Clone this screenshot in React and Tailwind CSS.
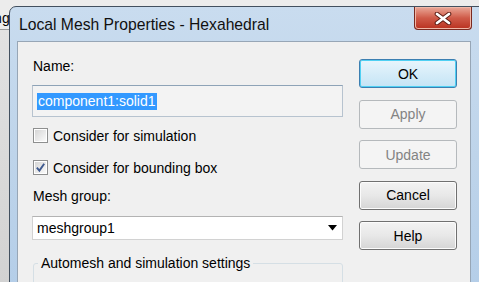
import clsx from 'clsx';

function Checkbox({ checked }) {
  return (
    <span className="w-[15px] h-[15px] shrink-0 border border-[#8e8f8f] p-px bg-white">
      <span className="w-full h-full flex items-center justify-center bg-linear-to-br from-[#d6d6d6] to-[#fafafa]">
        {checked && (
          <svg width="11" height="11" viewBox="0 0 11 11">
            <path d="M1.8 5.6 L4.4 8.6 L9.2 1.8" fill="none" stroke="#3f5a8f" strokeWidth="1.9" />
          </svg>
        )}
      </span>
    </span>
  );
}

function Btn({ children, variant = 'normal' }) {
  return (
    <div
      className={clsx(
        'h-[29px] rounded-[3px] border flex items-center justify-center text-[14px] leading-none',
        variant === 'default' && 'border-[#3c7fb1] bg-linear-to-b from-[#e8f5fc] to-[#c4e4f5] text-black shadow-[inset_0_0_0_1px_#4fd0f3]',
        variant === 'disabled' && 'border-[#b5b9bc] bg-[#f4f4f4] text-[#838383]',
        variant === 'normal' && 'border-[#707070] bg-linear-to-b from-[#f3f3f3] via-[#e8e8e8] to-[#d5d5d5] text-black shadow-[inset_0_0_0_1px_#fcfcfc]'
      )}
    >
      {children}
    </div>
  );
}

export default function App() {
  return (
    <div className="w-[479px] h-[282px] relative overflow-hidden bg-linear-to-b from-[#e4e4e4] to-[#d2d2d2] font-['Liberation_Sans',Arial,sans-serif] text-black">
      {/* desktop behind the dialog */}
      <div className="h-[30px] border-b border-[#9a9a9a] bg-[#ececec] pt-[10px] text-[14px] leading-[16px] -ml-[9px]">
        ing
      </div>

      {/* dialog window */}
      <div className="absolute left-[9px] top-[6px] w-[480px] h-[300px] border border-[#42505f] rounded-tl-[7px] bg-linear-to-b from-[#c9dcef] via-[#bed4ea] to-[#b3cde8] pl-[7px]">
        <div className="h-[34px] flex items-start">
          <div className="self-center pl-[2px] pt-[1px] text-[15.7px] leading-[18px] text-[#101010]">
            Local Mesh Properties - Hexahedral
          </div>
          <div className="ml-auto mr-[16px] w-[58px] h-[23px] rounded-b-[4px] border border-t-0 border-[#7a2a20] bg-linear-to-b from-[#e9a899] via-[#cf5a48] to-[#b9301f] shadow-[inset_0_0_0_1px_#f0b8a8] flex items-center justify-center">
            <svg width="18" height="13" viewBox="0 0 18 13">
              <path d="M3 2 L15 11 M15 2 L3 11" stroke="#5a1a12" strokeWidth="4.6" strokeLinecap="round" />
              <path d="M3 2 L15 11 M15 2 L3 11" stroke="#ffffff" strokeWidth="2.8" strokeLinecap="round" />
            </svg>
          </div>
        </div>

        <div className="w-[454px] h-[260px] border border-[#97a6b6] bg-[#f0f0f0] flex text-[14px] leading-[16px]">
          <div className="w-[311px] ml-[14px] pt-[16px] flex flex-col">
            <div className="h-[16px] pl-px">Name:</div>
            <div className="mt-[11px] h-[32px] border border-[#b7c3cf] border-t-[#8ea3b7] bg-[#f3f3f3] flex items-center pl-[4px]">
              <span className="bg-[#3399ff] text-white px-px h-[17px] leading-[17px]">component1:solid1</span>
            </div>
            <div className="mt-[11px] h-[15px] flex items-center gap-[5px] pl-px">
              <Checkbox />
              <span>Consider for simulation</span>
            </div>
            <div className="mt-[17px] h-[15px] flex items-center gap-[5px] pl-px">
              <Checkbox checked />
              <span>Consider for bounding box</span>
            </div>
            <div className="mt-[13px] h-[16px] pl-px">Mesh group:</div>
            <div className="mt-[12px] h-[24px] border border-[#d2d2d2] border-t-[#b3b3b3] bg-white flex items-center pl-[4px] pr-[5px]">
              <span>meshgroup1</span>
              <svg className="ml-auto" width="9" height="6" viewBox="0 0 9 6">
                <path d="M0 0 H9 L4.5 5.5 Z" fill="#000" />
              </svg>
            </div>
            <fieldset className="mt-[15px] ml-px h-[40px] border border-[#d5dfe5] rounded-[3px] pl-[4px]">
              <legend className="px-[3px]">Automesh and simulation settings</legend>
            </fieldset>
          </div>

          <div className="w-[98px] ml-[16px] pt-[17px] flex flex-col gap-[11.5px]">
            <Btn variant="default">OK</Btn>
            <Btn variant="disabled">Apply</Btn>
            <Btn variant="disabled">Update</Btn>
            <Btn>Cancel</Btn>
            <Btn>Help</Btn>
          </div>
        </div>
      </div>
    </div>
  );
}
